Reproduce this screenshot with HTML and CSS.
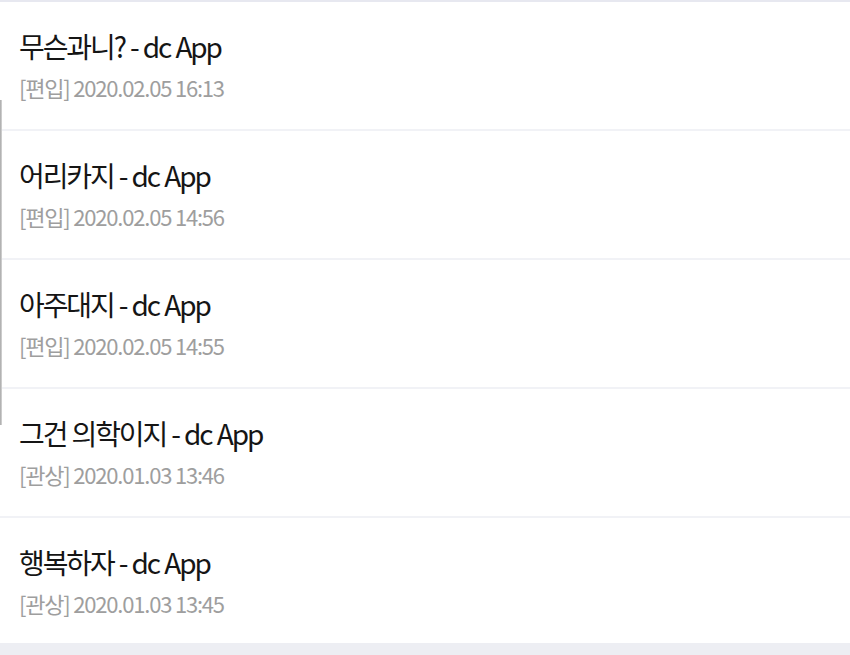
FILE: index.html
```html
<!DOCTYPE html>
<html>
<head>
<meta charset="utf-8">
<title>dc App 글 목록</title>
<link rel="stylesheet" href="styles.css">
</head>
<body>
    <ul class="post-list">
        <li class="post">
            <div class="post-title">무슨과니? - dc App</div>
            <div class="post-meta">[편입] 2020.02.05 16:13</div>
        </li>
        <li class="post">
            <div class="post-title">어리카지 - dc App</div>
            <div class="post-meta">[편입] 2020.02.05 14:56</div>
        </li>
        <li class="post">
            <div class="post-title">아주대지 - dc App</div>
            <div class="post-meta">[편입] 2020.02.05 14:55</div>
        </li>
        <li class="post">
            <div class="post-title">그건 의학이지 - dc App</div>
            <div class="post-meta">[관상] 2020.01.03 13:46</div>
        </li>
        <li class="post">
            <div class="post-title">행복하자 - dc App</div>
            <div class="post-meta">[관상] 2020.01.03 13:45</div>
        </li>
    </ul>
    <div class="scroll-edge"></div>
</body>
</html>
```

FILE: styles.css
```css
body {
    margin: 0;
    padding: 0;
    height: 655px;
    overflow: hidden;
    background-color: #edeef3;
    font-family: "Noto Sans CJK KR", "Noto Sans", sans-serif;
}

.post-list {
    list-style: none;
    margin: 0;
    padding: 0;
    background-color: #ffffff;
    border-top: 2px solid #e7e8f0;
}

.post {
    height: 129px;
    box-sizing: border-box;
    padding: 30px 19px 0;
    border-bottom: 2px solid #f1f2f6;
}

.post:last-child {
    height: 125px;
    border-bottom: none;
}

.post-title {
    font-size: 28px;
    line-height: 28px;
    letter-spacing: -2.1px;
    word-spacing: 1px;
    color: #151515;
}

.post-meta {
    margin-top: 16px;
    font-size: 22px;
    line-height: 22px;
    letter-spacing: -1.2px;
    color: #9e9e9e;
}

.scroll-edge {
    position: absolute;
    left: 0;
    top: 100px;
    width: 2px;
    height: 325px;
    background: linear-gradient(to right, #a6a6a6, #d8d8d8);
}
```
